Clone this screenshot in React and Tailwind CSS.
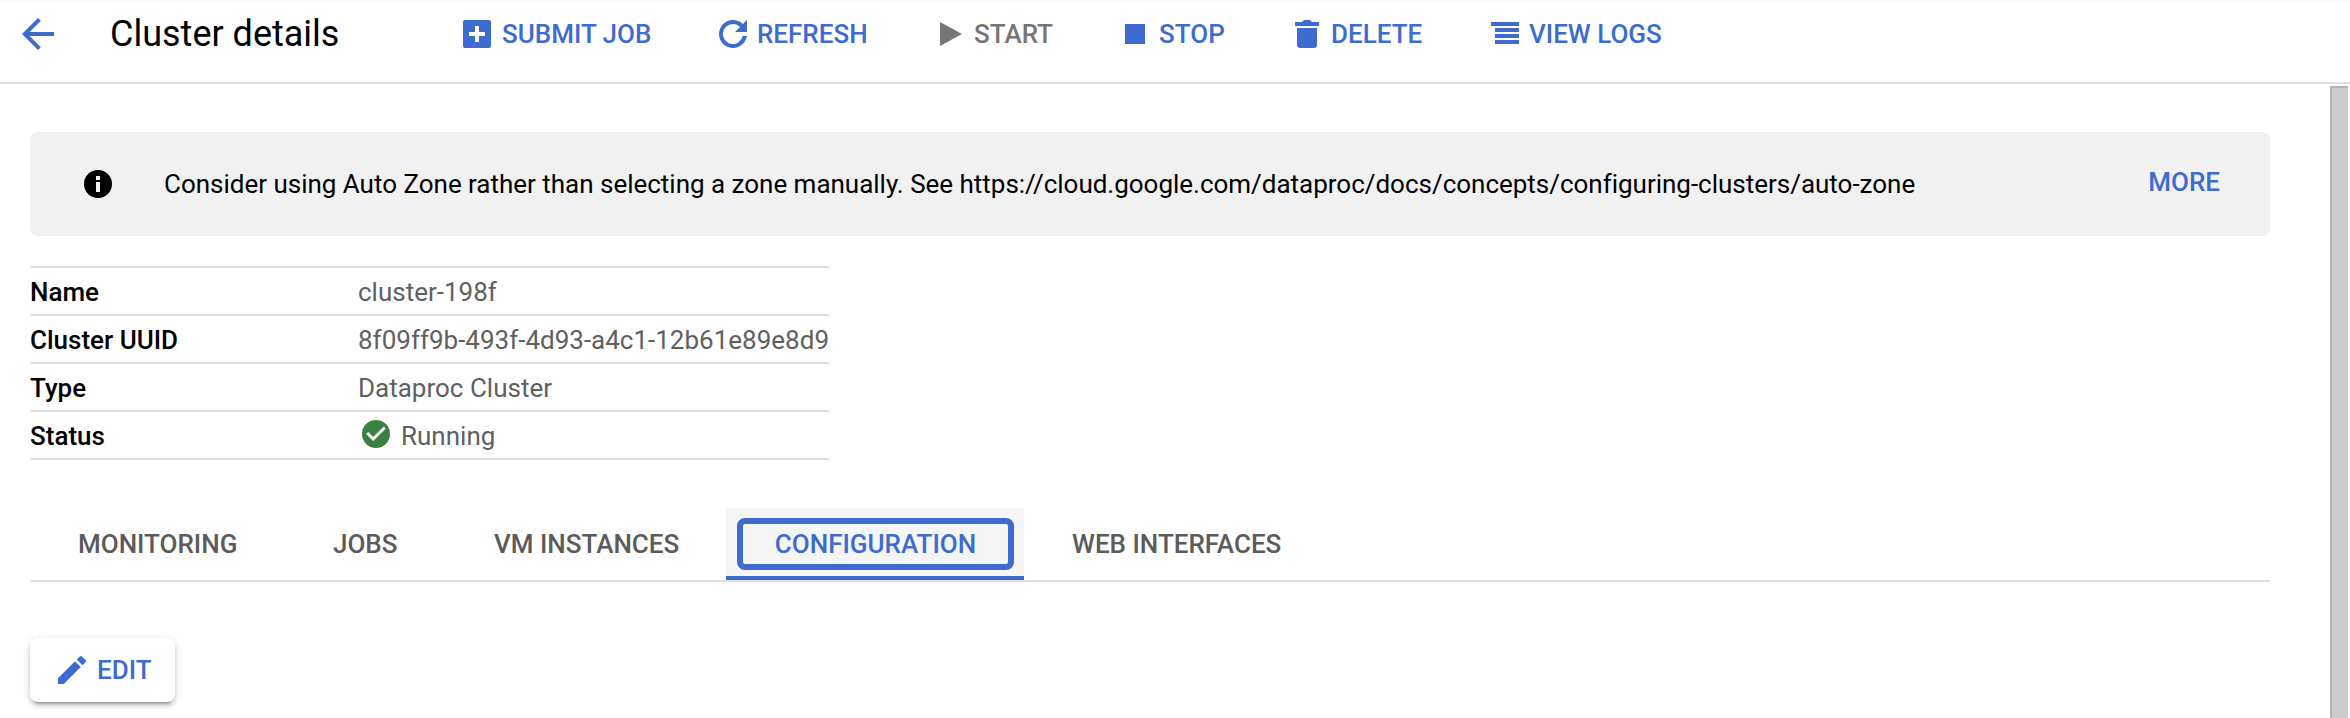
const icons = {
  addBox: "M15 2H3a1 1 0 0 0-1 1v12a1 1 0 0 0 1 1h12a1 1 0 0 0 1-1V3a1 1 0 0 0-1-1zm-2 8h-3v3H8v-3H5V8h3V5h2v3h3v2z",
  refresh: "M13.95 4.05A7 7 0 1 0 15.93 10h-2.1A5 5 0 1 1 9 4c1.38 0 2.6.56 3.5 1.5L10 8h6V2z",
  play: "M5 3v12l11-6z",
  stop: "M4 4h10v10H4z",
  trash: "M4 6h10v8.5a1.5 1.5 0 0 1-1.5 1.5h-7A1.5 1.5 0 0 1 4 14.5zM3 3h3.5l1-1h3l1 1H15v2H3z",
  logs: "M2 3h14v2H2zM4 6h12v2H4zM4 9h12v2H4zM4 12h12v2H4z",
  info: "M9 2a7 7 0 1 0 0 14A7 7 0 0 0 9 2zm1 11H8V8h2v5zm0-6H8V5h2v2z",
  check: "M9 2a7 7 0 1 0 0 14A7 7 0 0 0 9 2zM7.6 12.5 4.1 9l1-1 2.5 2.5 5.3-5.3 1 1z",
  edit: "M2 13.12V16h2.88l8.5-8.5-2.88-2.88zM15.78 5.1c.3-.3.3-.78 0-1.08l-1.8-1.8a.77.77 0 0 0-1.08 0L11.38 3.74l2.88 2.88z",
};

function Icon({ name, className = "" }) {
  return (
    <svg viewBox="0 0 18 18" className={`size-9 shrink-0 fill-current ${className}`}>
      <path d={icons[name]} />
    </svg>
  );
}

const actions = [
  { icon: "addBox", label: "SUBMIT JOB", layout: "w-64 gap-[7px]", color: "text-[#3d6bd0]" },
  { icon: "refresh", label: "REFRESH", layout: "w-[215px] gap-1.5", color: "text-[#3d6bd0]" },
  { icon: "play", label: "START", layout: "w-[187px] gap-2", color: "text-[#757575]" },
  { icon: "stop", label: "STOP", layout: "w-[172px] gap-1.5", color: "text-[#3d6bd0]" },
  { icon: "trash", label: "DELETE", layout: "w-[198px] gap-1.5", color: "text-[#3d6bd0]" },
  { icon: "logs", label: "VIEW LOGS", layout: "w-64 gap-1.5", color: "text-[#3d6bd0]" },
];

const details = [
  ["Name", "cluster-198f"],
  ["Cluster UUID", "8f09ff9b-493f-4d93-a4c1-12b61e89e8d9"],
  ["Type", "Dataproc Cluster"],
  ["Status", "Running"],
];

const tabs = [
  { label: "MONITORING", width: "w-[255px]" },
  { label: "JOBS", width: "w-[161px]" },
  { label: "VM INSTANCES", width: "w-[280px]" },
  { label: "CONFIGURATION", width: "w-[298px]", active: true },
  { label: "WEB INTERFACES", width: "w-[304px]" },
];

function Header() {
  return (
    <header className="flex h-[84px] items-start border-b-2 border-[#e0e0e0] bg-gradient-to-b from-[#f8f8f8] to-white to-[4px]">
      <svg viewBox="0 0 24 24" className="mt-2.5 ml-3.5 size-12 fill-[#3d6bd0]">
        <path d="M20 11H7.83l5.59-5.59L12 4l-8 8 8 8 1.41-1.41L7.83 13H20z" />
      </svg>
      <h1 className="mt-2.5 ml-12 w-[349px] text-[36px] leading-[48px] whitespace-nowrap">Cluster details</h1>
      <nav className="mt-4 flex">
        {actions.map((a) => (
          <button key={a.label} className={`flex items-center text-left font-medium leading-9 whitespace-nowrap ${a.layout} ${a.color}`}>
            <Icon name={a.icon} />
            {a.label}
          </button>
        ))}
      </nav>
    </header>
  );
}

function Banner() {
  return (
    <div className="flex h-[104px] items-center rounded-lg bg-[#f1f1f1] pr-[50px] pl-[50px]">
      <Icon name="info" />
      <p className="ml-12 flex-1 leading-9 tracking-[-0.015px]">
        Consider using Auto Zone rather than selecting a zone manually. See
        https://cloud.google.com/dataproc/docs/concepts/configuring-clusters/auto-zone
      </p>
      <a className="mb-1 font-medium leading-9 text-[#3d6bd0]">MORE</a>
    </div>
  );
}

export default function App() {
  return (
    <div className="flex h-[718px] w-[2350px] flex-col overflow-hidden bg-white font-[Roboto,sans-serif] text-[26px] text-black">
      <Header />
      <div className="flex min-h-0 flex-1 justify-between">
        <main className="ml-[30px] w-[2240px] pt-12">
          <Banner />
          <dl className="mt-[30px] w-[799px] border-t-2 border-[#e0e0e0]">
            {details.map(([term, value]) => (
              <div key={term} className="flex h-12 items-center border-b-2 border-[#e0e0e0] leading-[44px] whitespace-nowrap">
                <dt className="w-[328px] pt-0.5 font-medium">{term}</dt>
                <dd className="flex items-center pt-0.5 text-[#5f5f5f]">
                  {term === "Status" && <Icon name="check" className="mr-[7px] mb-1 text-[#3b8040]" />}
                  {value}
                </dd>
              </div>
            ))}
          </dl>
          <div className="mt-12 flex h-[74px] border-b-2 border-[#e0e0e0] font-medium text-[#5b5b5b]">
            {tabs.map((t) =>
              t.active ? (
                <div key={t.label} className={`flex h-[72px] border-b-4 border-[#3d6bd0] bg-[#f5f5f5] pt-2.5 pr-2.5 pb-1.5 pl-[11px] ${t.width}`}>
                  <span className="flex flex-1 items-center justify-center rounded-lg border-[6px] border-[#3d6bd0] leading-9 text-[#3d6bd0]">{t.label}</span>
                </div>
              ) : (
                <div key={t.label} className={`flex h-[72px] items-center pl-12 whitespace-nowrap ${t.width}`}>{t.label}</div>
              )
            )}
          </div>
          <button className="mt-14 flex h-16 w-[145px] items-center gap-[7px] rounded-lg bg-white pl-6 font-medium text-[#3d6bd0] shadow-[0_6px_2px_-4px_rgba(0,0,0,0.2),0_4px_4px_rgba(0,0,0,0.14),0_2px_10px_rgba(0,0,0,0.12)]">
            <Icon name="edit" />
            EDIT
          </button>
        </main>
        <div className="mt-0.5 mr-0.5 w-[18px] border-t-2 border-l-2 border-[#b3b3b3] bg-[#cccccc]" />
      </div>
    </div>
  );
}
